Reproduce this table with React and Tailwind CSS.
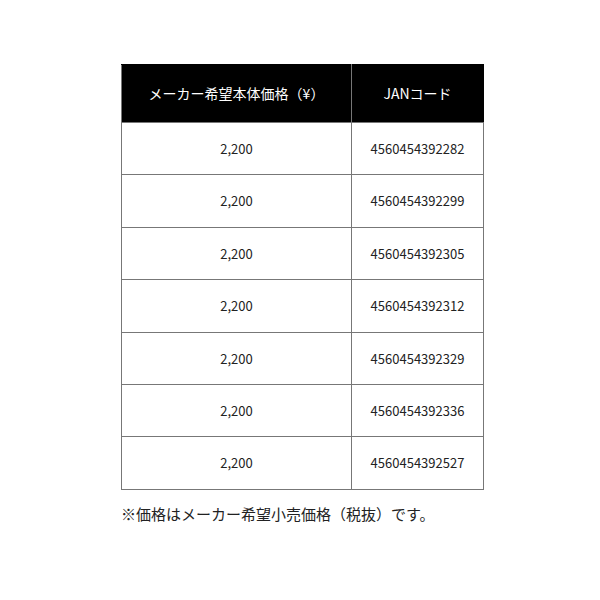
import React from "react";

const rows = [
  "4560454392282",
  "4560454392299",
  "4560454392305",
  "4560454392312",
  "4560454392329",
  "4560454392336",
  "4560454392527",
];

export default function App() {
  return (
    <div
      className="w-[600px] h-[600px] bg-white pt-[64px] pl-[121px]"
      style={{ fontFamily: '"Noto Sans CJK JP", "Noto Sans", sans-serif' }}
    >
      <table className="w-[363px] border-collapse text-[#222] table-fixed">
        <thead>
          <tr className="bg-black text-white h-[58px]">
            <th className="w-[230px] border border-[#777] border-t-black border-l-[#777] font-normal text-[14px] text-center">
              メーカー希望本体価格（¥）
            </th>
            <th className="border border-[#777] border-t-black border-r-black font-normal text-[14px] text-center">
              JANコード
            </th>
          </tr>
        </thead>
        <tbody>
          {rows.map((jan, i) => (
            <tr key={i} className="h-[52.4px]">
              <td className="border border-[#777] text-center text-[13px]">2,200</td>
              <td className="border border-[#777] text-center text-[13px]">{jan}</td>
            </tr>
          ))}
        </tbody>
      </table>
      <p className="mt-[13px] text-[15px] text-[#222] leading-[22px]">
        ※価格はメーカー希望小売価格（税抜）です。
      </p>
    </div>
  );
}
